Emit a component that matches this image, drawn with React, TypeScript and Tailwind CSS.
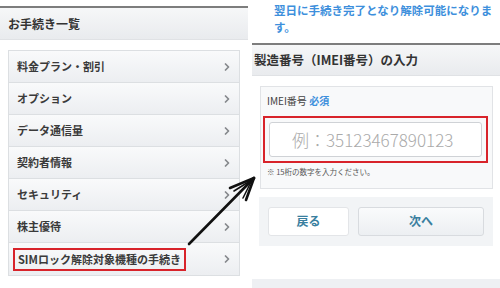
import { ChevronRight } from 'lucide-react';

const items = ['料金プラン・割引', 'オプション', 'データ通信量', '契約者情報', 'セキュリティ', '株主優待'];

const font = { fontFamily: '"Noto Sans CJK JP", "Noto Sans", sans-serif' };

export default function App() {
  return (
    <div className="relative flex w-[500px] h-[288px] overflow-hidden bg-white" style={font}>
      {/* Left screen */}
      <div className="w-[248px] flex flex-col pt-[6px]">
        <div className="h-[2px] bg-[#7d7d7d]" />
        <div className="h-[32px] flex items-center pl-[8px] bg-gradient-to-b from-[#f6f7f8] to-[#e9ebee] border-b border-[#e0e2e5] text-[12px] font-bold text-[#333]">
          お手続き一覧
        </div>
        <div className="mt-[10px] ml-[8px] w-[232px] border border-[#dcdfe2] flex flex-col">
          {items.map((t) => (
            <div
              key={t}
              className="h-[32px] flex items-center justify-between pl-[8px] pr-[6px] bg-gradient-to-b from-[#f9fafb] to-[#eceef1] border-b border-[#dcdfe2] text-[11px] font-bold text-[#3a3a3a]"
            >
              <span>{t}</span>
              <ChevronRight size={12} strokeWidth={3.5} className="text-[#85888c]" />
            </div>
          ))}
          <div className="h-[32px] flex items-center justify-between pl-[4px] pr-[6px] bg-gradient-to-b from-[#f9fafb] to-[#eceef1] text-[11px] font-bold text-[#3a3a3a]">
            <span className="border-2 border-[#d8232a] px-[3px] h-[23px] flex items-center">SIMロック解除対象機種の手続き</span>
            <ChevronRight size={12} strokeWidth={3.5} className="text-[#85888c]" />
          </div>
        </div>
      </div>

      {/* Right screen */}
      <div className="ml-[4px] w-[248px] flex flex-col">
        <div className="h-[46px] pl-[22px] pt-[2px] text-[11.5px] font-bold leading-[17px] text-[#3d8fdc]">
          翌日に手続き完了となり解除可能になりま
          <br />
          す。
        </div>
        <div className="h-[2px] bg-[#7d7d7d]" />
        <div className="h-[33px] flex items-center pl-[2px] bg-gradient-to-b from-[#f6f7f8] to-[#e9ebee] border-b border-[#e0e2e5] text-[12.5px] font-bold text-[#333]">
          製造番号（IMEI番号）の入力
        </div>
        <div className="mt-[10px] ml-[8px] w-[233px] border border-[#e1e3e6] bg-[#f8f9fa] flex flex-col pt-[6px] pb-[10px]">
          <div className="pl-[6px] text-[10px] text-[#444]">
            IMEI番号 <span className="font-bold text-[#3d8fdc]">必須</span>
          </div>
          <div className="mt-[8px] ml-[2px] w-[225px] h-[47px] border-2 border-[#d8232a] p-[4px] flex">
            <div className="flex-1 bg-white border border-[#cfd2d6] rounded-[3px] flex items-center pl-[22px] text-[17px] font-light text-[#aaa]">
              例：35123467890123
            </div>
          </div>
          <div className="mt-[3px] pl-[6px] text-[7.5px] text-[#555]">※ 15桁の数字を入力ください。</div>
        </div>
        <div className="mt-[8px] ml-[7px] w-[234px] h-[52px] bg-[#f2f4f6] flex items-center gap-[9px] px-[9px]">
          <div className="w-[81px] h-[29px] bg-white border border-[#e3e5e8] rounded-[3px] flex items-center justify-center text-[12px] font-bold text-[#3a7f9f]">
            戻る
          </div>
          <div className="flex-1 h-[29px] bg-gradient-to-b from-[#fafbfc] to-[#eceff2] border border-[#d8dbdf] rounded-[3px] flex items-center justify-center text-[12px] font-bold text-[#3a7f9f]">
            次へ
          </div>
        </div>
        <div className="mt-[33px] h-[10px] bg-[#eef0f3]" />
      </div>

      {/* Arrow overlay */}
      <svg className="absolute left-0 top-0" width="500" height="288" viewBox="0 0 500 288">
        <g stroke="#111" strokeWidth="2.6" strokeLinecap="round" strokeLinejoin="round" fill="none">
          <path d="M189 244 L254 178" />
          <path d="M254 178 L230 188" />
          <path d="M254 178 L246 200" />
          <path d="M250 181 L234 191" strokeWidth="1.6" />
          <path d="M251 182 L243 198" strokeWidth="1.6" />
        </g>
      </svg>
    </div>
  );
}
